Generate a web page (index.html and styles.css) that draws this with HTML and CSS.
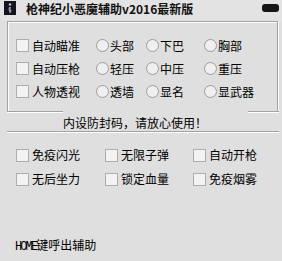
FILE: index.html
```html
<!DOCTYPE html>
<html lang="zh">
<head>
<meta charset="utf-8">
<link rel="stylesheet" href="styles.css">
</head>
<body>
<div class="win">
  <div class="titlebar">
    <svg class="appicon" width="12" height="14" viewBox="0 0 12 14">
      <rect width="12" height="14" fill="#14141e"/>
      <circle cx="6" cy="3.5" r="1.2" fill="#c8c8d8"/>
      <path d="M5 6 L7 6 L6.5 8 L7.5 10 L6.5 12 L5.5 12 L5 10 L4.5 8 Z" fill="#9a9ab0"/>
    </svg>
    <span class="title">枪神纪小恶魔辅助v2016最新版</span>
    <span class="close"></span>
  </div>

  <div class="group">
    <div class="opts">
      <label class="opt"><span class="cb"></span>自动瞄准</label>
      <label class="opt"><span class="rb"></span>头部</label>
      <label class="opt"><span class="rb"></span>下巴</label>
      <label class="opt"><span class="rb"></span>胸部</label>

      <label class="opt"><span class="cb"></span>自动压枪</label>
      <label class="opt"><span class="rb"></span>轻压</label>
      <label class="opt"><span class="rb"></span>中压</label>
      <label class="opt"><span class="rb"></span>重压</label>

      <label class="opt"><span class="cb"></span>人物透视</label>
      <label class="opt"><span class="rb"></span>透墙</label>
      <label class="opt"><span class="rb"></span>显名</label>
      <label class="opt"><span class="rb"></span>显武器</label>
    </div>
  </div>
  <div class="group-foot">
    <span class="seg seg-left"></span>
    <span class="notice">内设防封码，请放心使用！</span>
    <span class="seg seg-right"></span>
  </div>

  <div class="sep"></div>

  <div class="extras">
    <label class="opt"><span class="cb"></span>免疫闪光</label>
    <label class="opt"><span class="cb"></span>无限子弹</label>
    <label class="opt"><span class="cb"></span>自动开枪</label>
    <label class="opt"><span class="cb"></span>无后坐力</label>
    <label class="opt"><span class="cb"></span>锁定血量</label>
    <label class="opt"><span class="cb"></span>免疫烟雾</label>
  </div>

  <div class="hint"><span class="latin">HOME</span>键呼出辅助</div>
</div>
</body>
</html>
```

FILE: styles.css
```css
html, body {
  margin: 0;
  padding: 0;
}
body {
  width: 282px;
  height: 261px;
  overflow: hidden;
  background: #dfdfdf;
  font-family: "Noto Sans CJK SC", "Noto Sans", sans-serif;
  font-size: 12px;
  color: #000;
}
.win {
  display: flex;
  flex-direction: column;
  height: 261px;
}
.titlebar {
  height: 21px;
  display: flex;
  align-items: flex-start;
  background: #e3e3e3;
}
.appicon {
  margin: 1px 0 0 4px;
  display: block;
}
.title {
  margin-left: 10px;
  margin-top: 1px;
  font-weight: bold;
  font-size: 12px;
  line-height: 16px;
  color: #111;
}
.close {
  margin-left: auto;
  margin-right: 3px;
  margin-top: 4px;
  width: 17px;
  height: 8px;
  border-radius: 3px;
  background: #151515;
}
.group {
  margin-left: 7px;
  width: 271px;
  height: 90px;
  box-sizing: border-box;
  border: 1px solid #a2a2a2;
  border-bottom: none;
  box-shadow: inset 1px 1px 0 #fff, 1px 0 0 #fff;
}
.opts {
  display: grid;
  grid-template-columns: 80px 50px 58px auto;
  grid-auto-rows: 23px;
  padding: 12px 0 0 8px;
}
.opt {
  display: flex;
  align-items: center;
  line-height: 14px;
  white-space: nowrap;
}
.cb {
  width: 13px;
  height: 13px;
  box-sizing: border-box;
  border: 1px solid #adadad;
  background: #f3f3f3;
  margin-right: 3px;
  flex: none;
}
.rb {
  width: 13px;
  height: 13px;
  box-sizing: border-box;
  border: 1px solid #9c9c9c;
  border-radius: 50%;
  background: #efefef;
  margin-right: 1px;
  flex: none;
}
.group-foot {
  display: flex;
  align-items: flex-start;
  margin-left: 7px;
  width: 272px;
  height: 19px;
}
.seg {
  border-top: 1px solid #a2a2a2;
  box-shadow: 0 1px 0 #fff;
  height: 0;
}
.seg-left {
  width: 56px;
}
.seg-right {
  flex: 1;
}
.notice {
  width: 185px;
  margin-top: 4px;
  line-height: 15px;
}
.sep {
  margin: 1px 0 0 7px;
  width: 272px;
  border-top: 1px solid #a2a2a2;
  box-shadow: 0 1px 0 #fff;
}
.extras {
  display: grid;
  grid-template-columns: 89px 88px auto;
  grid-auto-rows: 24px;
  padding: 11px 0 0 16px;
}
.hint {
  margin: 47px 0 0 15px;
  line-height: 14px;
}
.latin {
  font-family: "Liberation Mono", monospace;
  font-size: 12px;
  letter-spacing: -1.9px;
}
```
